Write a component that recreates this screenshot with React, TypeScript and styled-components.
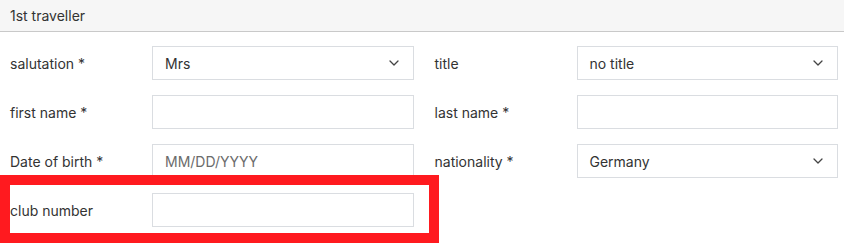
import React from 'react';
import styled, {createGlobalStyle} from "styled-components";

const GlobalStyle = createGlobalStyle`
  body {
    margin: 0;
    background: #fff;
    font-family: Inter, "Noto Sans", sans-serif;
    color: #333;
  }
`

type Field = {
    label: string
    kind: "select" | "input"
    value?: string
    placeholder?: string
}

const fields: Field[] = [
    {label: "salutation *", kind: "select", value: "Mrs"},
    {label: "title", kind: "select", value: "no title"},
    {label: "first name *", kind: "input"},
    {label: "last name *", kind: "input"},
    {label: "Date of birth *", kind: "input", placeholder: "MM/DD/YYYY"},
    {label: "nationality *", kind: "select", value: "Germany"},
    {label: "club number", kind: "input"},
]

const Chevron = () => (
    <svg width="10" height="6" viewBox="0 0 10 6">
        <polyline points="1,1 5,5 9,1" fill="none" stroke="#444" strokeWidth="1.3"
                  strokeLinecap="round" strokeLinejoin="round"/>
    </svg>
)

export default function App() {
    return (
        <>
            <GlobalStyle/>
            <StyleSection>
                <Header>1st traveller</Header>
                <FormGrid>
                    {fields.map((f, index) => (
                        <FieldRow key={index}>
                            <Label>{f.label}</Label>
                            {f.kind === "select" ? (
                                <SelectBox>
                                    <span>{f.value}</span>
                                    <Chevron/>
                                </SelectBox>
                            ) : (
                                <TextBox placeholder={f.placeholder}/>
                            )}
                        </FieldRow>
                    ))}
                    <Highlight/>
                </FormGrid>
            </StyleSection>
        </>
    );
}

const StyleSection = styled.section`
  width: 844px;
`

const Header = styled.div`
  height: 31px;
  display: flex;
  align-items: center;
  padding-left: 10px;
  background-color: #f6f6f6;
  border-bottom: 1px solid #c9c9c9;
  font-size: 14px;
  color: #333;
`

const FormGrid = styled.div`
  position: relative;
  display: grid;
  grid-template-columns: 1fr 1fr;
  column-gap: 21px;
  row-gap: 15px;
  padding: 14px 6px 20px 10px;
`

const FieldRow = styled.div`
  display: grid;
  grid-template-columns: 142px 1fr;
  align-items: center;
`

const Label = styled.label`
  font-size: 14px;
  color: #333;
`

const boxStyles = `
  box-sizing: border-box;
  height: 34px;
  width: 100%;
  border: 1px solid #dadde1;
  background: #fff;
  font-family: Inter, "Noto Sans", sans-serif;
  font-size: 14px;
  color: #333;
  padding: 0 12px;
`

const SelectBox = styled.div`
  ${boxStyles};
  display: flex;
  align-items: center;
  justify-content: space-between;
  padding-right: 14px;
`

const TextBox = styled.input`
  ${boxStyles};
  outline: none;

  &::placeholder {
    color: #6b6b6b;
  }
`

const Highlight = styled.div`
  position: absolute;
  left: 0;
  top: 143px;
  width: 439px;
  height: 68px;
  box-sizing: border-box;
  border: 10px solid #ff1a1f;
  pointer-events: none;
`
